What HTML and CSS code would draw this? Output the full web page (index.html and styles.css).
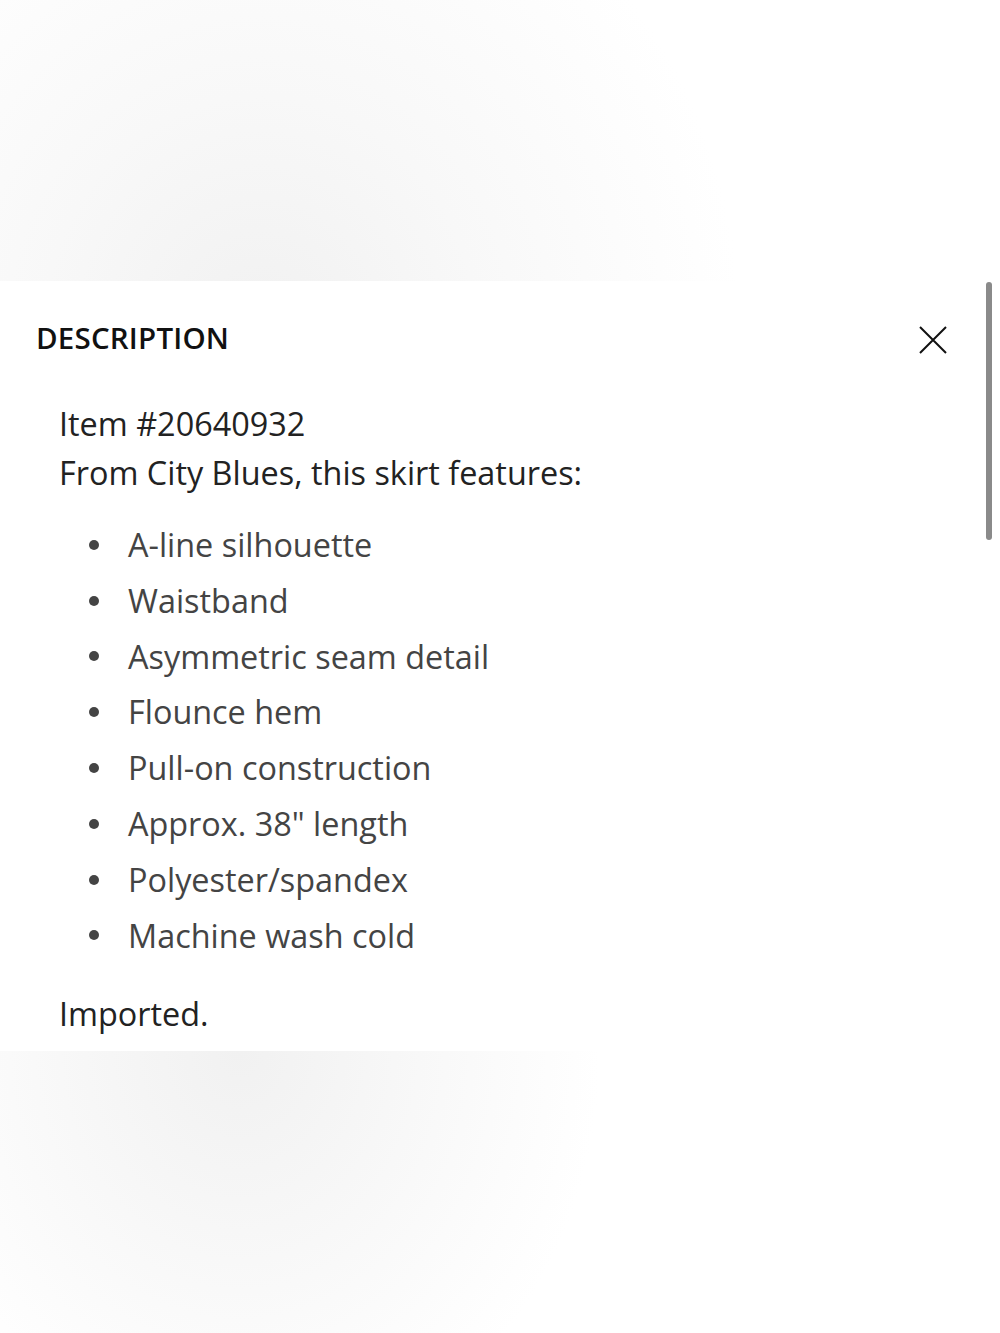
FILE: index.html
```html
<!DOCTYPE html>
<html lang="en">
<head>
    <meta charset="UTF-8">
    <meta name="viewport" content="width=device-width, initial-scale=1.0">
    <title>Description</title>
    <link rel="stylesheet" href="styles.css">
</head>
<body>
    <div class="backdrop backdrop-top"></div>
    <section class="sheet">
        <div class="sheet-scroll"></div>
        <header class="sheet-header">
            <h2>DESCRIPTION</h2>
            <button class="close" aria-label="Close">
                <svg width="28" height="28" viewBox="0 0 28 28">
                    <path d="M1 1 L27 27 M27 1 L1 27" stroke="#111" stroke-width="2" fill="none"/>
                </svg>
            </button>
        </header>
        <div class="sheet-body">
            <p class="item-no">Item #20640932</p>
            <p class="intro">From City Blues, this skirt features:</p>
            <ul class="features">
                <li>A-line silhouette</li>
                <li>Waistband</li>
                <li>Asymmetric seam detail</li>
                <li>Flounce hem</li>
                <li>Pull-on construction</li>
                <li>Approx. 38" length</li>
                <li>Polyester/spandex</li>
                <li>Machine wash cold</li>
            </ul>
            <p class="note">Imported.</p>
        </div>
    </section>
    <div class="backdrop backdrop-bottom"></div>
</body>
</html>
```

FILE: styles.css
```css
body {
    margin: 0;
    padding: 0;
    font-family: "Open Sans", sans-serif;
    background: #FFFFFF;
    color: #222222;
}

.backdrop-top {
    height: 281px;
    background: radial-gradient(ellipse 480px 520px at 260px 330px, #F1F1F1 0%, #F8F8F8 45%, #FFFFFF 100%);
}

.backdrop-bottom {
    height: 282px;
    background: radial-gradient(ellipse 360px 420px at 240px 0px, #F1F1F1 0%, #F8F8F8 50%, #FFFFFF 100%);
}

.sheet {
    position: relative;
    background: #FFFFFF;
    padding: 0 0 13px;
}

/* thin scroll indicator on the right edge */
.sheet-scroll {
    position: absolute;
    top: 1px;
    right: 8px;
    width: 6px;
    height: 258px;
    border-radius: 3px;
    background: #8A8A8A;
}

.sheet-header {
    display: flex;
    align-items: center;
    justify-content: space-between;
    padding: 36px 53px 0 36px;
}

.sheet-header h2 {
    margin: 0;
    font-size: 29.5px;
    font-weight: 600;
    color: #111111;
    letter-spacing: 0.2px;
}

.close {
    border: none;
    background: none;
    padding: 0;
    margin-top: 4px;
    width: 28px;
    height: 28px;
    cursor: pointer;
}

.sheet-body {
    padding: 41px 0 0 59px;
    font-size: 32.4px;
}

.sheet-body p {
    margin: 0;
    line-height: 49px;
}

.features {
    list-style: none;
    margin: 20px 0 26px;
    padding: 0 0 0 30px;
    color: #444444;
}

.features li {
    display: flex;
    align-items: center;
    line-height: 55.8px;
}

.features li::before {
    content: "";
    flex: none;
    width: 10px;
    height: 10px;
    margin: 0 29px 0 0;
    border-radius: 50%;
    background: #444444;
}
```
